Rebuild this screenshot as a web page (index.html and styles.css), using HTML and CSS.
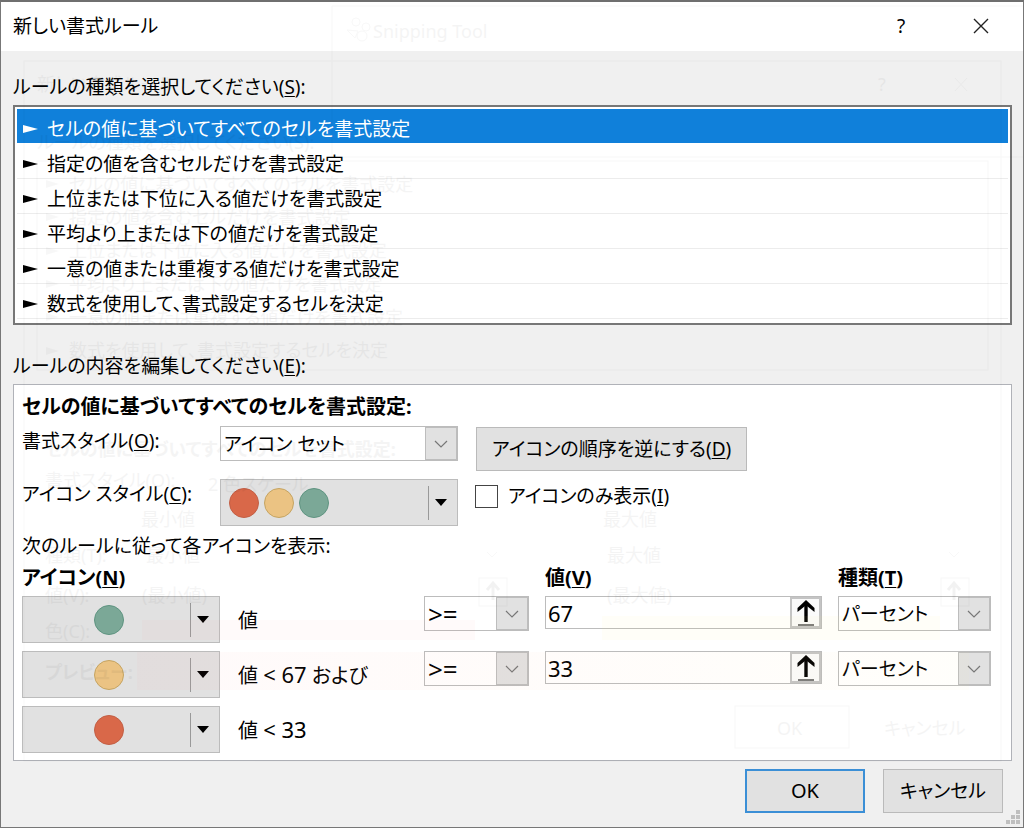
FILE: index.html
```html
<!DOCTYPE html>
<html lang="ja">
<head>
<meta charset="utf-8">
<meta name="viewport" content="width=device-width, initial-scale=1">
<title>新しい書式ルール</title>
<link rel="stylesheet" href="styles.css">
</head>
<body>
<main class="dialog">
  <header class="titlebar">
    <h1 class="title">新しい書式ルール</h1>
    <button class="title-btn" type="button" aria-label="ヘルプ"><span class="help">?</span></button>
    <button class="title-btn" type="button" aria-label="閉じる">
      <svg width="16" height="16" viewBox="0 0 16 16"><path d="M1 1L15 15M15 1L1 15" stroke="#222" stroke-width="1.4" fill="none"/></svg>
    </button>
  </header>

  <div class="content">
    <p class="section-label" id="types">ルールの種類を選択してください(<u>S</u>):</p>
    <ul class="rules" role="listbox" aria-labelledby="types">
      <li class="rule selected" role="option" aria-selected="true"><svg class="mark" viewBox="0 0 15 10"><path d="M0 1L15 5L0 9Z"/></svg>セルの値に基づいてすべてのセルを書式設定</li>
      <li class="rule" role="option"><svg class="mark" viewBox="0 0 15 10"><path d="M0 1L15 5L0 9Z"/></svg>指定の値を含むセルだけを書式設定</li>
      <li class="rule" role="option"><svg class="mark" viewBox="0 0 15 10"><path d="M0 1L15 5L0 9Z"/></svg>上位または下位に入る値だけを書式設定</li>
      <li class="rule" role="option"><svg class="mark" viewBox="0 0 15 10"><path d="M0 1L15 5L0 9Z"/></svg>平均より上または下の値だけを書式設定</li>
      <li class="rule" role="option"><svg class="mark" viewBox="0 0 15 10"><path d="M0 1L15 5L0 9Z"/></svg>一意の値または重複する値だけを書式設定</li>
      <li class="rule" role="option"><svg class="mark" viewBox="0 0 15 10"><path d="M0 1L15 5L0 9Z"/></svg>数式を使用して、書式設定するセルを決定</li>
    </ul>

    <p class="section-label edit-label">ルールの内容を編集してください(<u>E</u>):</p>
    <section class="panel">
      <h2 class="panel-title">セルの値に基づいてすべてのセルを書式設定:</h2>
      <div class="style-grid">
        <label class="field-label" for="format">書式スタイル(<u>O</u>):</label>
        <div class="combo format-combo">
          <select id="format"><option>アイコン セット</option></select>
          <span class="combo-arrow"><svg width="14" height="8" viewBox="0 0 14 8"><path d="M1 1L7 7L13 1"/></svg></span>
        </div>
        <button class="btn reverse" type="button">アイコンの順序を逆にする(<u>D</u>)</button>

        <label class="field-label" for="iconset">アイコン スタイル(<u>C</u>):</label>
        <button class="icon-drop set" id="iconset" type="button">
          <span class="dots"><i class="dot red"></i><i class="dot yellow"></i><i class="dot green"></i></span>
          <span class="drop-arrow"><svg width="12" height="7" viewBox="0 0 12 7"><path d="M0 0H12L6 7Z"/></svg></span>
        </button>
        <label class="check"><input type="checkbox"><span>アイコンのみ表示(<u>I</u>)</span></label>
      </div>

      <p class="hint">次のルールに従って各アイコンを表示:</p>
      <div class="rule-grid">
        <h3 class="col-head icon-head">アイコン(<u>N</u>)</h3>
        <h3 class="col-head" id="value-head">値(<u>V</u>)</h3>
        <h3 class="col-head" id="type-head">種類(<u>T</u>)</h3>

        <button class="icon-drop" type="button" aria-label="緑の丸">
          <span class="dots"><i class="dot green"></i></span>
          <span class="drop-arrow"><svg width="12" height="7" viewBox="0 0 12 7"><path d="M0 0H12L6 7Z"/></svg></span>
        </button>
        <span class="condition">値</span>
        <div class="combo operator">
          <select aria-label="演算子 1"><option>&gt;=</option></select>
          <span class="combo-arrow"><svg width="14" height="8" viewBox="0 0 14 8"><path d="M1 1L7 7L13 1"/></svg></span>
        </div>
        <div class="ref-box">
          <input type="text" value="67" aria-labelledby="value-head">
          <button type="button" aria-label="セル範囲を選択"><svg width="18" height="26" viewBox="0 0 18 26"><path d="M9 2V22" stroke="#000" stroke-width="3.4"/><path d="M9 0L17.5 8V12L9 5.2L.5 12V8Z"/><path d="M1 25H17" stroke="#333" stroke-width="1.3"/></svg></button>
        </div>
        <div class="combo">
          <select aria-labelledby="type-head"><option>パーセント</option></select>
          <span class="combo-arrow"><svg width="14" height="8" viewBox="0 0 14 8"><path d="M1 1L7 7L13 1"/></svg></span>
        </div>

        <button class="icon-drop" type="button" aria-label="黄色の丸">
          <span class="dots"><i class="dot yellow"></i></span>
          <span class="drop-arrow"><svg width="12" height="7" viewBox="0 0 12 7"><path d="M0 0H12L6 7Z"/></svg></span>
        </button>
        <span class="condition">値 <b>&lt; 67</b> および</span>
        <div class="combo operator">
          <select aria-label="演算子 2"><option>&gt;=</option></select>
          <span class="combo-arrow"><svg width="14" height="8" viewBox="0 0 14 8"><path d="M1 1L7 7L13 1"/></svg></span>
        </div>
        <div class="ref-box">
          <input type="text" value="33" aria-labelledby="value-head">
          <button type="button" aria-label="セル範囲を選択"><svg width="18" height="26" viewBox="0 0 18 26"><path d="M9 2V22" stroke="#000" stroke-width="3.4"/><path d="M9 0L17.5 8V12L9 5.2L.5 12V8Z"/><path d="M1 25H17" stroke="#333" stroke-width="1.3"/></svg></button>
        </div>
        <div class="combo">
          <select aria-labelledby="type-head"><option>パーセント</option></select>
          <span class="combo-arrow"><svg width="14" height="8" viewBox="0 0 14 8"><path d="M1 1L7 7L13 1"/></svg></span>
        </div>

        <button class="icon-drop" type="button" aria-label="赤の丸">
          <span class="dots"><i class="dot red"></i></span>
          <span class="drop-arrow"><svg width="12" height="7" viewBox="0 0 12 7"><path d="M0 0H12L6 7Z"/></svg></span>
        </button>
        <span class="condition">値 <b>&lt; 33</b></span>
      </div>
    </section>

    <footer class="actions">
      <button class="btn action primary" type="button">OK</button>
      <button class="btn action" type="button">キャンセル</button>
    </footer>
  </div>

  <svg class="grip" width="14" height="14" viewBox="0 0 14 14" aria-hidden="true"><path d="M10 0h4v4h-4zM5 5h4v4h-4zM10 5h4v4h-4zM0 10h4v4h-4zM5 10h4v4h-4zM10 10h4v4h-4z"/></svg>

  <!-- Faint trace of the windows fading out behind the dialog -->
  <svg class="afterimage" width="1024" height="828" viewBox="0 0 1024 828" aria-hidden="true">
    <defs>
      <linearGradient id="scale"><stop offset="0" stop-color="#f8696b"/><stop offset="1" stop-color="#ffeb84"/></linearGradient>
    </defs>
    <g class="trace-line">
      <path d="M332 157V6H1024M332 157H1024"/>
      <rect x="24" y="61" width="977" height="700"/>
      <rect x="37" y="161" width="951" height="209"/>
      <rect x="735" y="706" width="114" height="42"/>
      <rect x="479" y="578" width="28" height="28"/>
      <rect x="941" y="578" width="28" height="28"/>
      <path d="M955 78L967 91M967 78L955 91"/>
      <circle cx="356" cy="22" r="4"/><circle cx="366" cy="27" r="4"/><circle cx="362" cy="36" r="5"/><path d="M347 30L358 31L355 38Z"/>
      <path d="M487 552L492 557L497 552M949 552L954 557L959 552"/>
    </g>
    <g class="trace-arrow"><path d="M493 600V584M487 590L493 583L499 590M954 600V584M948 590L954 583L960 590"/></g>
    <path class="trace-mark" d="M46 180l13 4l-13 4zM46 213l13 4l-13 4zM46 247l13 4l-13 4zM46 280l13 4l-13 4zM46 313l13 4l-13 4zM46 347l13 4l-13 4z"/>
    <rect x="142" y="620" width="333" height="20" fill="#f8696b" opacity=".035"/>
    <rect x="602" y="616" width="338" height="24" fill="#ffeb84" opacity=".06"/>
    <rect x="137" y="652" width="832" height="38" fill="url(#scale)" opacity=".035"/>
    <g class="trace-text">
      <text x="373" y="38">Snipping Tool</text>
      <text x="37" y="91">新しい書式ルール</text>
      <text x="878" y="91">?</text>
      <text x="37" y="149">ルールの種類を選択してください(S):</text>
      <text x="69" y="191">セルの値に基づいてすべてのセルを書式設定</text>
      <text x="69" y="224">指定の値を含むセルだけを書式設定</text>
      <text x="69" y="257">上位または下位に入る値だけを書式設定</text>
      <text x="69" y="291">平均より上または下の値だけを書式設定</text>
      <text x="69" y="324">一意の値または重複する値だけを書式設定</text>
      <text x="69" y="357">数式を使用して、書式設定するセルを決定</text>
      <text x="45" y="456" class="trace-bold">セルの値に基づいてすべてのセルを書式設定:</text>
      <text x="45" y="487">書式スタイル(O):</text>
      <text x="208" y="491">2 色スケール</text>
      <text x="141" y="526">最小値</text>
      <text x="603" y="526">最大値</text>
      <text x="45" y="562">種類(T):</text>
      <text x="146" y="562">最小値</text>
      <text x="607" y="562">最大値</text>
      <text x="45" y="602">値(V):</text>
      <text x="142" y="602">(最小値)</text>
      <text x="607" y="602">(最大値)</text>
      <text x="45" y="638">色(C):</text>
      <text x="45" y="679" class="trace-bold">プレビュー:</text>
      <text x="777" y="735">OK</text>
      <text x="884" y="735">キャンセル</text>
    </g>
  </svg>
</main>
</body>
</html>
```
FILE: styles.css
```css
* { box-sizing: border-box; }

body {
  margin: 0;
  background: #f0f0f0;
}

body, button, input, select {
  font-family: "Noto Sans", "Noto Sans CJK JP", sans-serif;
  font-size: 19px;
  font-weight: 400;
  line-height: 28px;
  font-feature-settings: "palt";
  color: #000;
}

h1, h2, h3, p, ul { margin: 0; padding: 0; }
button { cursor: pointer; }
u { text-underline-offset: 2px; text-decoration-thickness: 1px; }

.dialog {
  position: relative;
  min-height: 100vh;
  display: flex;
  flex-direction: column;
  overflow: hidden;
  border: 1px solid #777;
  border-top: 2px solid #6f6f6f;
  background: #f0f0f0;
}

/* Title bar */
.titlebar {
  display: flex;
  align-items: flex-start;
  height: 49px;
  padding: 0 2px 0 12px;
  background: #fff;
}
.title { flex: 1; padding-top: 10px; font-size: 19px; font-weight: 400; }
.title-btn {
  display: grid;
  place-items: center;
  width: 80px;
  height: 47px;
  padding: 0;
  border: 0;
  background: none;
}

/* Body */
.content { flex: 1; padding: 22px 11px 12px 12px; }
.section-label { padding-bottom: 4px; }

.rules {
  list-style: none;
  padding: 2px 2px 4px;
  border: 2px solid #777;
  background: #fff;
}
.rule {
  display: flex;
  align-items: center;
  gap: 9px;
  height: 35px;
  padding: 5px 6px 0;
  border-bottom: 1px solid #ececec;
}
.rule.selected { background: #1080da; color: #fff; border-color: #fff; }
.mark { width: 15px; height: 10px; fill: currentColor; }

.edit-label { padding-top: 27px; }

.panel {
  padding: 8px 20px 7px 8px;
  border: 1px solid #b0b2b8;
  background: #fff;
}
.panel-title, .col-head { font-size: 20px; font-weight: 700; }

.style-grid {
  display: grid;
  grid-template-columns: 198px 238px 1fr;
  row-gap: 8px;
  align-items: start;
  padding-top: 5px;
}
.field-label { padding-top: 1px; }
.reverse { justify-self: start; margin: 1px 0 0 18px; }

.combo {
  display: grid;
  grid-template-columns: 1fr 32px;
  align-items: stretch;
  height: 35px;
  border: 1px solid #bcbcbc;
  background: #fff;
}
.combo select {
  grid-area: 1 / 1 / 2 / 3;
  appearance: none;
  width: 100%;
  padding: 0 36px 0 3px;
  border: 0;
  border-radius: 0;
  background: none;
}
.operator select { font-size: 26px; }
.combo-arrow {
  grid-area: 1 / 2;
  display: grid;
  place-items: center;
  border: 1px solid #bdbdbd;
  background: #e1e1e1;
  pointer-events: none;
}
.combo-arrow path { fill: none; stroke: #777; stroke-width: 1.2; }

.btn {
  height: 44px;
  padding: 0 15px;
  border: 1px solid #bababa;
  background: #e1e1e1;
}

.icon-drop {
  display: flex;
  align-items: center;
  height: 47px;
  padding: 0;
  border: 1px solid #bcbcbc;
  background: #e1e1e1;
}
.dots { flex: 1; display: flex; justify-content: center; gap: 5px; padding-left: 5px; }
.set .dots { justify-content: flex-start; padding-left: 8px; }
.dot { width: 30px; height: 30px; border-radius: 50%; border: 1px solid; }
.red { background: #d96849; border-color: #c25f45; }
.yellow { background: #ebc383; border-color: #c5a462; }
.green { background: #7ba897; border-color: #5f9481; }
.drop-arrow {
  display: grid;
  place-items: center;
  width: 29px;
  height: 34px;
  padding-right: 5px;
  border-left: 1px solid #999;
}

.check {
  display: flex;
  align-items: center;
  gap: 10px;
  justify-self: start;
  margin: 3px 0 0 17px;
}
.check input {
  appearance: none;
  width: 23px;
  height: 23px;
  margin: 0;
  border: 1px solid #444;
  background: #fff;
}

.hint { padding-top: 6px; }

.rule-grid {
  display: grid;
  grid-template-columns: 198px 172px 105px minmax(0, 1fr) 153px;
  column-gap: 16px;
  row-gap: 8px;
  align-items: start;
  padding-top: 4px;
}
.icon-head { grid-column: 1 / 4; }
.col-head { height: 24px; line-height: 28px; }
.condition { padding: 11px 0 0 2px; font-size: 20px; white-space: pre; }
.condition b { font-weight: 400; font-size: 22px; line-height: 1; }

.ref-box {
  display: flex;
  height: 33px;
  border: 1px solid #bcbcbc;
  background: #fff;
}
.ref-box input {
  flex: 1;
  min-width: 0;
  padding: 0 2px;
  border: 0;
  background: none;
  font-size: 22px;
}
.ref-box button {
  display: grid;
  place-items: center;
  width: 31px;
  padding: 0;
  border: 2px solid #c4c4c4;
  background: #fafafa;
}

.actions {
  display: flex;
  justify-content: flex-end;
  gap: 18px;
  padding: 8px 9px 0 0;
}
.action { width: 120px; padding: 0; }
.primary { border: 2px solid #3b8fd6; font-size: 20px; }

.grip {
  position: absolute;
  right: 3px;
  bottom: 3px;
  fill: #bfbfbf;
}

/* Afterimage layer over the dialog */
.afterimage {
  position: absolute;
  top: -2px;
  left: -1px;
  pointer-events: none;
}
.trace-line { fill: none; stroke: #000; opacity: .025; }
.trace-arrow { fill: none; stroke: #000; stroke-width: 3; opacity: .05; }
.trace-mark { opacity: .03; }
.trace-text { font-size: 18px; opacity: .04; }
.trace-bold { font-weight: 700; }
```
